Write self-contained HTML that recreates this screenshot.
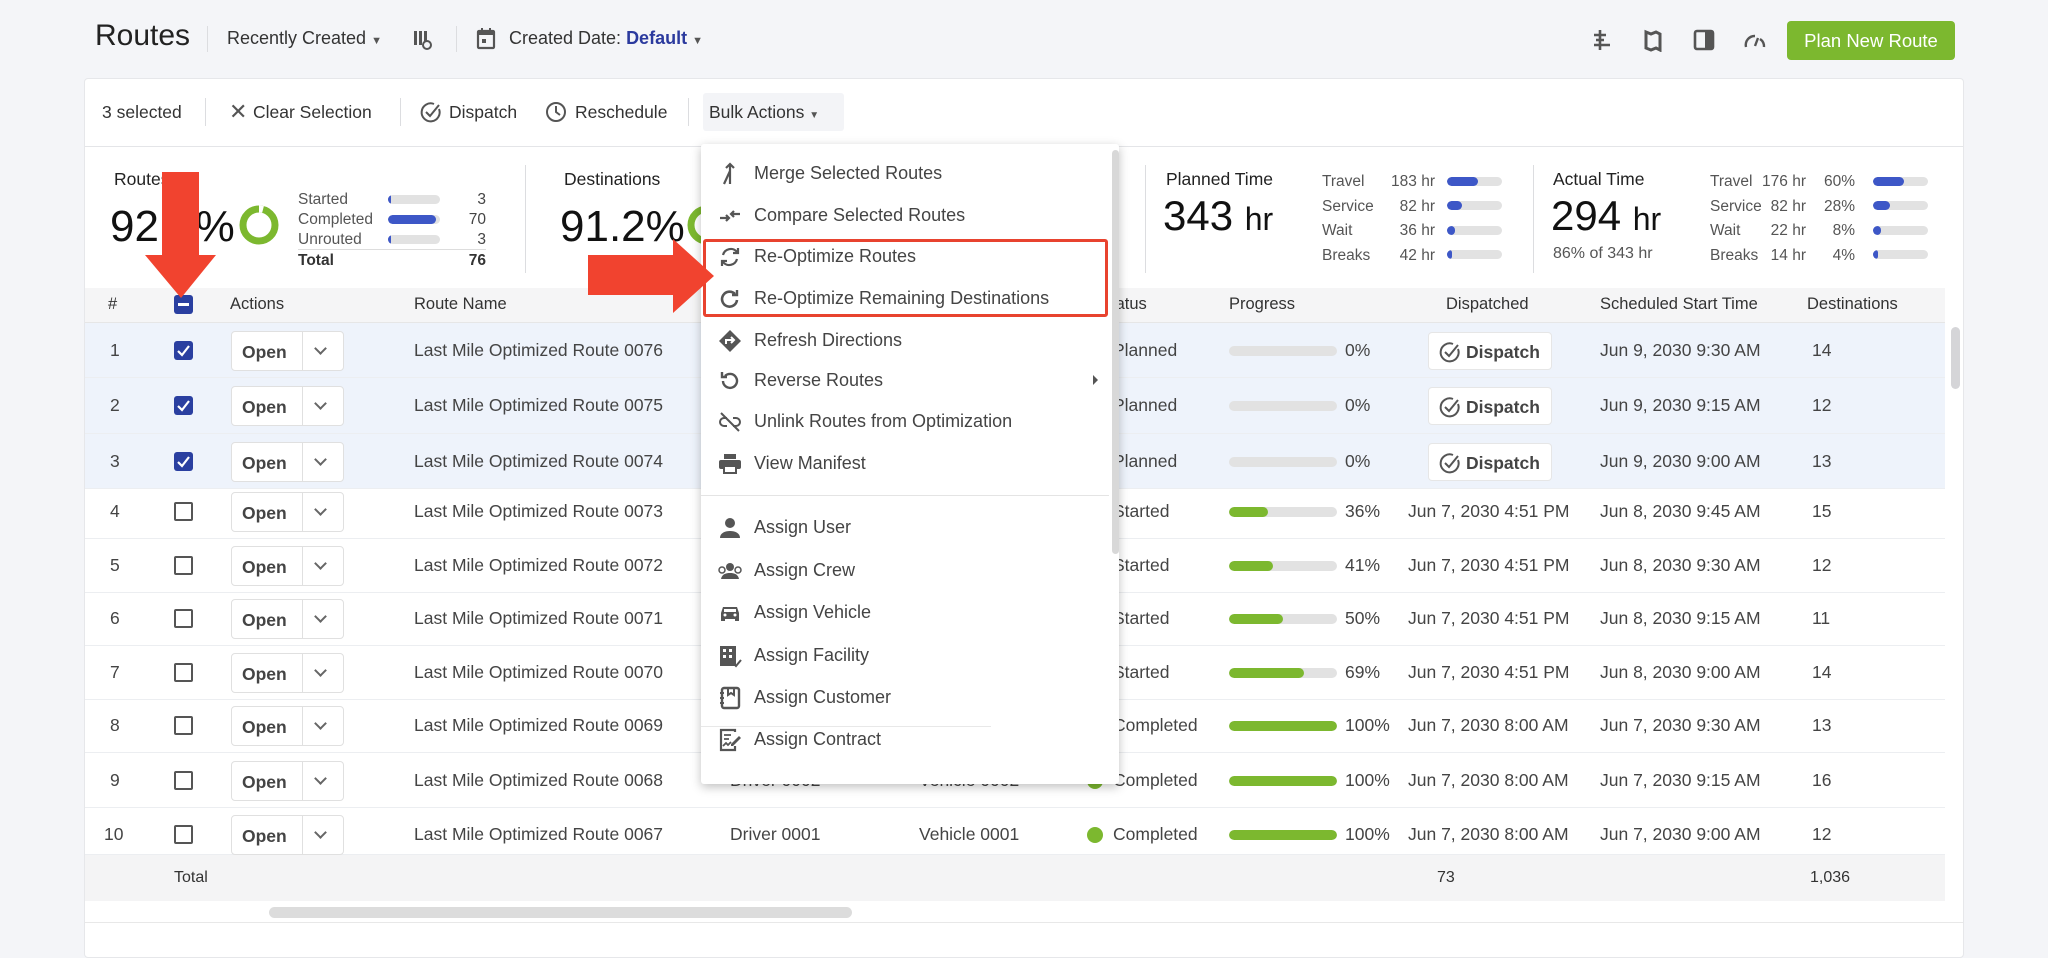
<!DOCTYPE html>
<html><head><meta charset="utf-8"><style>
*{box-sizing:border-box;margin:0;padding:0}
body{width:2048px;height:941px;overflow:hidden;background:#f4f5f8;font-family:"Liberation Sans",sans-serif;color:#333;position:relative}
.a{position:absolute;white-space:nowrap}
.card{position:absolute;left:84px;top:78px;width:1880px;height:880px;background:#fff;border:1px solid #e6e7ea;border-radius:4px}
.vl{position:absolute;width:1px;background:#dcdde0}
.t17{font-size:17.5px;color:#444}
.hd{font-size:16.5px;color:#333}
.row{position:absolute;left:85px;width:1860px;border-bottom:1px solid #eceef1}
.sel{background:#eef3fb}
.cb{position:absolute;left:174px;width:19px;height:19px;border:2px solid #555;border-radius:2px;background:#fff}
.cbx{position:absolute;left:174px;width:19px;height:19px;border-radius:3px;background:#2a3fa0}
.open{position:absolute;left:231px;width:113px;height:40px;border:1px solid #e0e0e0;border-radius:4px;background:#fff}
.open span{position:absolute;left:10px;top:10px;font-size:17.5px;font-weight:bold;color:#444}
.open i{position:absolute;left:70px;top:0;width:1px;height:38px;background:#e0e0e0}
.open b{position:absolute;left:84px;top:12px;width:9px;height:9px;border-right:2px solid #666;border-bottom:2px solid #666;transform:rotate(45deg)}
.bar{position:absolute;left:1229px;width:108px;height:10px;border-radius:5px;background:#e2e2e2;overflow:hidden}
.bar i{display:block;height:10px;background:#7cb82f;border-radius:5px}
.sb{position:absolute;height:9px;border-radius:5px;background:#e2e2e2;overflow:hidden}
.sb i{display:block;height:9px;background:#3d57c7;border-radius:5px}
.disp{position:absolute;left:1428px;width:124px;height:38px;background:#fff;border:1px solid #e6e6e6;border-radius:4px;font-size:17.5px;font-weight:bold;color:#444}
.menu{position:absolute;left:701px;top:144px;width:418px;height:640px;background:#fff;border-radius:3px;box-shadow:0 3px 10px rgba(0,0,0,.25)}
.mi{position:absolute;left:53px;font-size:18px;color:#444;white-space:nowrap}
.ic{position:absolute;left:17px;width:24px;height:24px}
</style></head><body>

<div class="a" style="left:95px;top:19px;font-size:30px;color:#222">Routes</div>
<div class="vl" style="left:207px;top:26px;height:26px"></div>
<div class="a" style="left:227px;top:28px;font-size:18px;color:#333">Recently Created <span style="font-size:11px;color:#555">▼</span></div>
<svg class="a" style="left:412px;top:28px" width="22" height="24" viewBox="0 0 22 24"><rect x="2" y="3" width="3" height="14" fill="#555"/><rect x="7" y="3" width="3" height="14" fill="#555"/><rect x="12" y="3" width="3" height="10" fill="#555"/><circle cx="15" cy="17" r="4" fill="none" stroke="#555" stroke-width="2"/></svg>
<div class="vl" style="left:456px;top:26px;height:26px"></div>
<svg class="a" style="left:476px;top:27px" width="20" height="24" viewBox="0 0 20 24"><rect x="2" y="4" width="16" height="17" rx="1" fill="none" stroke="#555" stroke-width="2.2"/><rect x="2" y="4" width="16" height="4" fill="#555"/><rect x="5" y="1" width="2" height="5" fill="#555"/><rect x="13" y="1" width="2" height="5" fill="#555"/><rect x="6" y="12" width="4" height="4" fill="#555"/></svg>
<div class="a" style="left:509px;top:28px;font-size:18px;color:#333">Created Date: <b style="color:#2b3a9e">Default</b> <span style="font-size:11px;color:#555">▼</span></div>

<svg class="a" style="left:1590px;top:28px" width="24" height="24" viewBox="0 0 24 24"><path d="M10 2v20M4 7h12M6 12h8M4 17h16" stroke="#555" stroke-width="2.6" fill="none"/></svg>
<svg class="a" style="left:1642px;top:28px" width="22" height="24" viewBox="0 0 22 24"><path d="M4 4l5 2 5-2 4 2v16l-4-2-5 2-5-2z" fill="none" stroke="#555" stroke-width="3"/></svg>
<svg class="a" style="left:1692px;top:28px" width="24" height="24" viewBox="0 0 24 24"><rect x="3" y="3" width="18" height="18" rx="2" fill="none" stroke="#555" stroke-width="2.6"/><rect x="13" y="3" width="8" height="18" fill="#555"/></svg>
<svg class="a" style="left:1743px;top:30px" width="24" height="20" viewBox="0 0 24 20"><path d="M3 17A9 9 0 0 1 12 6M21 17A9 9 0 0 0 17 9" fill="none" stroke="#555" stroke-width="2.4"/><path d="M12 16l3-8" stroke="#555" stroke-width="2.4"/></svg>
<div class="a" style="left:1787px;top:21px;width:168px;height:39px;background:#7cb82f;border-radius:4px;color:#fff;font-size:18.5px;text-align:center;line-height:39px">Plan New Route</div>

<div class="card"></div>
<div class="a" style="left:102px;top:102px;font-size:17.5px;color:#333">3 selected</div>
<div class="vl" style="left:205px;top:98px;height:28px"></div>
<div class="a" style="left:229px;top:99px;font-size:22px;color:#555">✕</div>
<div class="a" style="left:253px;top:102px;font-size:17.5px;color:#333">Clear Selection</div>
<div class="vl" style="left:400px;top:98px;height:28px"></div>
<svg class="a" style="left:420px;top:101px" width="22" height="22" viewBox="0 0 22 22"><path d="M19 8A9 9 0 1 1 14 3" fill="none" stroke="#555" stroke-width="2"/><path d="M6 11l4 4 9-11" fill="none" stroke="#555" stroke-width="2"/></svg>
<div class="a" style="left:449px;top:102px;font-size:17.5px;color:#333">Dispatch</div>
<svg class="a" style="left:545px;top:101px" width="22" height="22" viewBox="0 0 22 22"><circle cx="11" cy="11" r="9" fill="none" stroke="#555" stroke-width="2"/><path d="M11 5v6l4 3" fill="none" stroke="#555" stroke-width="2"/></svg>
<div class="a" style="left:575px;top:102px;font-size:17.5px;color:#333">Reschedule</div>
<div class="vl" style="left:688px;top:98px;height:28px"></div>
<div class="a" style="left:703px;top:93px;width:141px;height:38px;background:#f3f4f7;border-radius:3px"></div>
<div class="a" style="left:709px;top:102px;font-size:17.5px;color:#333">Bulk Actions <span style="font-size:10px;color:#555">▼</span></div>
<div class="a" style="left:85px;top:146px;width:1878px;height:1px;background:#e4e5e8"></div>

<div class="a" style="left:114px;top:169px;font-size:17.5px;color:#222">Routes</div>
<div class="a" style="left:110px;top:202px;font-size:44px;color:#111">92.2%</div>
<svg class="a" style="left:238px;top:204px" width="42" height="42" viewBox="0 0 42 42"><circle cx="21" cy="21" r="16" fill="none" stroke="#7cb82f" stroke-width="7"/><path d="M21 5a16 16 0 0 1 4 .5" stroke="#fff" stroke-width="7" fill="none"/></svg>
<div class="a" style="left:298px;top:190px;font-size:15.5px;color:#555;line-height:20px">Started<br>Completed<br>Unrouted</div>
<div class="sb" style="left:388px;top:195px;width:52px"><i style="width:3px"></i></div>
<div class="sb" style="left:388px;top:215px;width:52px"><i style="width:48px"></i></div>
<div class="sb" style="left:388px;top:235px;width:52px"><i style="width:3px"></i></div>
<div class="a" style="left:450px;top:190px;width:36px;text-align:right;font-size:15.5px;color:#444;line-height:20px">3<br>70<br>3</div>
<div class="a" style="left:298px;top:249px;width:188px;height:1px;background:#ddd"></div>
<div class="a" style="left:298px;top:252px;font-size:15.5px;color:#333;font-weight:bold">Total</div>
<div class="a" style="left:450px;top:252px;width:36px;text-align:right;font-size:15.5px;color:#333;font-weight:bold">76</div>
<div class="vl" style="left:525px;top:165px;height:108px"></div>
<div class="a" style="left:564px;top:169px;font-size:17.5px;color:#222">Destinations</div>
<div class="a" style="left:560px;top:202px;font-size:44px;color:#111">91.2%</div>
<svg class="a" style="left:686px;top:204px" width="20" height="42"><circle cx="21" cy="21" r="16" fill="none" stroke="#7cb82f" stroke-width="7"/></svg>

<div class="vl" style="left:1145px;top:165px;height:108px"></div>
<div class="a" style="left:1166px;top:169px;font-size:17.5px;color:#222">Planned Time</div>
<div class="a" style="left:1163px;top:192px;font-size:42px;color:#111">343 <span style="font-size:32px">hr</span></div>
<div class="a" style="left:1322px;top:170px;font-size:15.5px;color:#555;line-height:24.5px">Travel<br>Service<br>Wait<br>Breaks</div>
<div class="a" style="left:1380px;top:170px;width:55px;text-align:right;font-size:15.5px;color:#555;line-height:24.5px">183 hr<br>82 hr<br>36 hr<br>42 hr</div>
<div class="sb" style="left:1447px;top:177px;width:55px"><i style="width:31px"></i></div>
<div class="sb" style="left:1447px;top:201px;width:55px"><i style="width:15px"></i></div>
<div class="sb" style="left:1447px;top:226px;width:55px"><i style="width:8px"></i></div>
<div class="sb" style="left:1447px;top:250px;width:55px"><i style="width:5px"></i></div>
<div class="vl" style="left:1533px;top:165px;height:108px"></div>
<div class="a" style="left:1553px;top:169px;font-size:17.5px;color:#222">Actual Time</div>
<div class="a" style="left:1551px;top:192px;font-size:42px;color:#111">294 <span style="font-size:32px">hr</span></div>
<div class="a" style="left:1553px;top:245px;font-size:16px;color:#555">86% of 343 hr</div>
<div class="a" style="left:1710px;top:170px;font-size:15.5px;color:#555;line-height:24.5px">Travel<br>Service<br>Wait<br>Breaks</div>
<div class="a" style="left:1750px;top:170px;width:56px;text-align:right;font-size:15.5px;color:#555;line-height:24.5px">176 hr<br>82 hr<br>22 hr<br>14 hr</div>
<div class="a" style="left:1812px;top:170px;width:43px;text-align:right;font-size:15.5px;color:#555;line-height:24.5px">60%<br>28%<br>8%<br>4%</div>
<div class="sb" style="left:1873px;top:177px;width:55px"><i style="width:31px"></i></div>
<div class="sb" style="left:1873px;top:201px;width:55px"><i style="width:17px"></i></div>
<div class="sb" style="left:1873px;top:226px;width:55px"><i style="width:8px"></i></div>
<div class="sb" style="left:1873px;top:250px;width:55px"><i style="width:5px"></i></div>

<div class="a" style="left:85px;top:288px;width:1860px;height:35px;background:#f5f5f6;border-bottom:1px solid #e6e6e6"></div>
<div class="a hd" style="left:108px;top:295px">#</div>
<div class="cbx" style="top:295px"><div style="position:absolute;left:4px;top:8px;width:11px;height:3px;background:#fff"></div></div>
<div class="a hd" style="left:230px;top:295px">Actions</div>
<div class="a hd" style="left:414px;top:295px">Route Name</div>
<div class="a hd" style="left:1100px;top:295px">Status</div>
<div class="a hd" style="left:1229px;top:295px">Progress</div>
<div class="a hd" style="left:1446px;top:295px">Dispatched</div>
<div class="a hd" style="left:1600px;top:295px">Scheduled Start Time</div>
<div class="a hd" style="left:1807px;top:295px">Destinations</div>

<div class="row sel" style="top:323px;height:55px"></div>
<div class="row sel" style="top:378px;height:56px"></div>
<div class="row sel" style="top:434px;height:55px"></div>
<div class="row" style="top:489px;height:50px"></div>
<div class="row" style="top:539px;height:54px"></div>
<div class="row" style="top:593px;height:53px"></div>
<div class="row" style="top:646px;height:54px"></div>
<div class="row" style="top:700px;height:53px"></div>
<div class="row" style="top:753px;height:55px"></div>
<div class="row" style="top:808px;height:47px"></div>

<div id="rows"></div>
<script>
var ys=[351,406,462,512,566,619,673,726,781,835];
var pct=[0,0,0,36,41,50,69,100,100,100];
var st=['Planned','Planned','Planned','Started','Started','Started','Started','Completed','Completed','Completed'];
var dsp=['','','','Jun 7, 2030 4:51 PM','Jun 7, 2030 4:51 PM','Jun 7, 2030 4:51 PM','Jun 7, 2030 4:51 PM','Jun 7, 2030 8:00 AM','Jun 7, 2030 8:00 AM','Jun 7, 2030 8:00 AM'];
var sch=['Jun 9, 2030 9:30 AM','Jun 9, 2030 9:15 AM','Jun 9, 2030 9:00 AM','Jun 8, 2030 9:45 AM','Jun 8, 2030 9:30 AM','Jun 8, 2030 9:15 AM','Jun 8, 2030 9:00 AM','Jun 7, 2030 9:30 AM','Jun 7, 2030 9:15 AM','Jun 7, 2030 9:00 AM'];
var des=[14,12,13,15,12,11,14,13,16,12];
var h='';
for(var i=0;i<10;i++){var y=ys[i];var t=y-11;
h+='<div class="a t17" style="left:'+(i==9?104:110)+'px;top:'+t+'px">'+(i+1)+'</div>';
if(i<3)h+='<div class="cbx" style="top:'+(y-10)+'px"><svg width="19" height="19" style="position:absolute;left:0;top:0"><path d="M4 10l4 4 7-9" stroke="#fff" stroke-width="2.2" fill="none"/></svg></div>';
else h+='<div class="cb" style="top:'+(y-10)+'px"></div>';
h+='<div class="open" style="top:'+(y-20)+'px"><span>Open</span><i></i><b></b></div>';
h+='<div class="a t17" style="left:414px;top:'+t+'px">Last Mile Optimized Route 00'+(76-i)+'</div>';
if(i==8){h+='<div class="a t17" style="left:730px;top:'+t+'px">Driver 0002</div><div class="a t17" style="left:919px;top:'+t+'px">Vehicle 0002</div>';}
if(i==9){h+='<div class="a t17" style="left:730px;top:'+t+'px">Driver 0001</div><div class="a t17" style="left:919px;top:'+t+'px">Vehicle 0001</div>';}
if(i>=7)h+='<div class="a" style="left:1087px;top:'+(y-8)+'px;width:16px;height:16px;border-radius:50%;background:#7cb82f"></div><div class="a t17" style="left:1113px;top:'+t+'px">'+st[i]+'</div>';
else h+='<div class="a t17" style="left:1113px;top:'+t+'px">'+st[i]+'</div>';
h+='<div class="bar" style="top:'+(y-5)+'px"><i style="width:'+(pct[i]*1.08)+'px"></i></div>';
h+='<div class="a t17" style="left:1345px;top:'+t+'px">'+pct[i]+'%</div>';
if(i<3)h+='<div class="disp" style="top:'+(y-19)+'px"><svg width="22" height="22" style="position:absolute;left:10px;top:8px" viewBox="0 0 22 22"><path d="M19 8A9 9 0 1 1 14 3" fill="none" stroke="#555" stroke-width="2"/><path d="M6 11l4 4 9-11" fill="none" stroke="#555" stroke-width="2"/></svg><span style="position:absolute;left:37px;top:9px">Dispatch</span></div>';
else h+='<div class="a t17" style="left:1408px;top:'+t+'px">'+dsp[i]+'</div>';
h+='<div class="a t17" style="left:1600px;top:'+t+'px">'+sch[i]+'</div>';
h+='<div class="a t17" style="left:1812px;top:'+t+'px">'+des[i]+'</div>';}
document.getElementById('rows').innerHTML=h;
</script>
<div class="a" style="left:1951px;top:327px;width:9px;height:62px;border-radius:5px;background:#d5d5d8"></div>

<div class="a" style="left:85px;top:855px;width:1860px;height:46px;background:#f4f4f5"></div>
<div class="a" style="left:174px;top:869px;font-size:16px;color:#333">Total</div>
<div class="a" style="left:1437px;top:869px;font-size:16px;color:#333">73</div>
<div class="a" style="left:1810px;top:869px;font-size:16px;color:#333">1,036</div>
<div class="a" style="left:269px;top:907px;width:583px;height:11px;border-radius:6px;background:#dcdcdc"></div>
<div class="a" style="left:85px;top:922px;width:1878px;height:1px;background:#e8e8e8"></div>

<div class="menu">
<div class="a" style="left:411px;top:6px;width:7px;height:404px;border-radius:4px;background:#d8d8d8"></div>
<svg class="ic" style="top:18px" viewBox="0 0 24 24"><path d="M12 22V9M12 9l-6 13M12 3v6M8 6l4-4 4 4" stroke="#555" stroke-width="2.2" fill="none"/></svg>
<div class="mi" style="top:19px">Merge Selected Routes</div>
<svg class="ic" style="top:60px" viewBox="0 0 24 24"><path d="M2 14h9M8 11l3 3-3 3M22 10h-9M16 7l-3 3 3 3" stroke="#555" stroke-width="2.2" fill="none"/></svg>
<div class="mi" style="top:61px">Compare Selected Routes</div>
<svg class="ic" style="top:101px" viewBox="0 0 24 24"><path d="M5 10a8 8 0 0 1 14-3M19 14a8 8 0 0 1-14 3" stroke="#555" stroke-width="2.2" fill="none"/><path d="M20 3v5h-5M4 21v-5h5" stroke="#555" stroke-width="2.2" fill="none"/></svg>
<div class="mi" style="top:102px">Re-Optimize Routes</div>
<svg class="ic" style="top:143px" viewBox="0 0 24 24"><path d="M19 13a7.5 7.5 0 1 1-2-6" stroke="#555" stroke-width="2.6" fill="none"/><path d="M19 3v5h-5" stroke="#555" stroke-width="2.4" fill="none"/></svg>
<div class="mi" style="top:144px">Re-Optimize Remaining Destinations</div>
<svg class="ic" style="top:185px" viewBox="0 0 24 24"><path d="M12 1l11 11-11 11L1 12z" fill="#555"/><path d="M8 15v-4h7M13 8l3 3-3 3" stroke="#fff" stroke-width="2" fill="none"/></svg>
<div class="mi" style="top:186px">Refresh Directions</div>
<svg class="ic" style="top:225px" viewBox="0 0 24 24"><path d="M5 12a7 7 0 1 0 2-5" stroke="#555" stroke-width="2.4" fill="none"/><path d="M4 3v5h5" stroke="#555" stroke-width="2.4" fill="none"/></svg>
<div class="mi" style="top:226px">Reverse Routes</div>
<div class="a" style="left:392px;top:231px;width:0;height:0;border-left:5px solid #555;border-top:5px solid transparent;border-bottom:5px solid transparent"></div>
<svg class="ic" style="top:266px" viewBox="0 0 24 24"><path d="M9 8H6a4 4 0 0 0 0 8h3M15 8h3a4 4 0 0 1 0 8h-3M3 3l18 18" stroke="#555" stroke-width="2" fill="none"/></svg>
<div class="mi" style="top:267px">Unlink Routes from Optimization</div>
<svg class="ic" style="top:308px" viewBox="0 0 24 24"><rect x="6" y="2" width="12" height="5" fill="#555"/><rect x="1" y="8" width="22" height="9" rx="2" fill="#555"/><rect x="6" y="14" width="12" height="7" fill="#fff" stroke="#555" stroke-width="2"/></svg>
<div class="mi" style="top:309px">View Manifest</div>
<div class="a" style="left:0;top:351px;width:408px;height:1px;background:#e4e4e4"></div>
<svg class="ic" style="top:372px" viewBox="0 0 24 24"><circle cx="12" cy="7" r="5" fill="#555"/><path d="M2 22c0-5 5-7 10-7s10 2 10 7z" fill="#555"/></svg>
<div class="mi" style="top:373px">Assign User</div>
<svg class="ic" style="top:415px" viewBox="0 0 24 24"><circle cx="12" cy="8" r="4" fill="#555"/><path d="M3 20c1-5 5-6 9-6s8 1 9 6z" fill="#555"/><circle cx="4" cy="11" r="3" fill="none" stroke="#555" stroke-width="1.5"/><circle cx="20" cy="11" r="3" fill="none" stroke="#555" stroke-width="1.5"/></svg>
<div class="mi" style="top:416px">Assign Crew</div>
<svg class="ic" style="top:457px" viewBox="0 0 24 24"><path d="M3 12l2-6h14l2 6v8h-4v-2H7v2H3z" fill="#555"/><circle cx="7" cy="14" r="1.5" fill="#fff"/><circle cx="17" cy="14" r="1.5" fill="#fff"/><rect x="6" y="8" width="12" height="3" fill="#fff"/></svg>
<div class="mi" style="top:458px">Assign Vehicle</div>
<svg class="ic" style="top:500px" viewBox="0 0 24 24"><rect x="2" y="2" width="16" height="20" fill="#555"/><g fill="#fff"><rect x="5" y="5" width="3" height="3"/><rect x="11" y="5" width="3" height="3"/><rect x="5" y="11" width="3" height="3"/><rect x="11" y="11" width="3" height="3"/></g><path d="M15 19l3 3 5-6" stroke="#555" stroke-width="2" fill="none"/></svg>
<div class="mi" style="top:501px">Assign Facility</div>
<svg class="ic" style="top:542px" viewBox="0 0 24 24"><rect x="4" y="2" width="17" height="20" rx="2" fill="none" stroke="#555" stroke-width="2.4"/><path d="M2 7h4M2 12h4M2 17h4M10 2v7l3-2 3 2V2" stroke="#555" stroke-width="2" fill="none"/></svg>
<div class="mi" style="top:543px">Assign Customer</div>
<div class="a" style="left:0;top:582px;width:290px;height:1px;background:#e8e8e8"></div>
<svg class="ic" style="top:584px" viewBox="0 0 24 24"><path d="M17 4V2H3v20h14v-4" stroke="#555" stroke-width="2.2" fill="none"/><path d="M6 7h7M6 11h5M5 18l3-3 2 2 3-3" stroke="#555" stroke-width="1.8" fill="none"/><path d="M13 16l8-8 2 2-8 8h-2z" fill="#555"/></svg>
<div class="mi" style="top:585px">Assign Contract</div>
</div>
<div class="a" style="left:703px;top:239px;width:405px;height:78px;border:3px solid #e8432f;border-radius:3px"></div>

<svg class="a" style="left:0;top:0" width="2048" height="941">
<path d="M162 172h37v83h17l-35 43-36-43h17z" fill="#f1432f"/>
<path d="M588 255h85v-16l41 37-41 37v-18h-85z" fill="#f1432f"/>
</svg>
</body></html>
